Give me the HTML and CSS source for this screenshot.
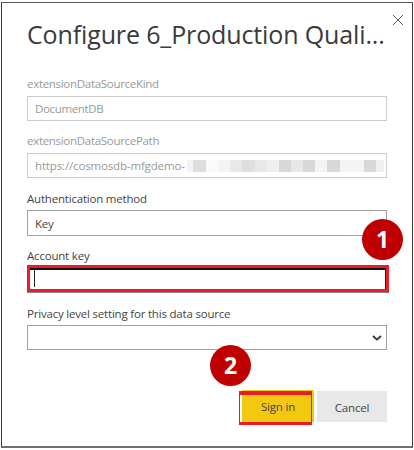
FILE: index.html
```
<!DOCTYPE html>
<html lang="en">
<head>
<meta charset="utf-8">
<title>Configure data source</title>
<link rel="stylesheet" href="styles.css">
</head>
<body>
<main class="dialog">
  <svg class="close" viewBox="0 0 12 12" aria-label="Close"><path d="M1 1L11 11M11 1L1 11"/></svg>
  <h1 class="title"><span>Configure 6_Production Quali...</span></h1>
  <div class="label muted kind">extensionDataSourceKind</div>
  <div class="field disabled">DocumentDB</div>
  <div class="label muted path">extensionDataSourcePath</div>
  <div class="field disabled"><span class="url">https://cosmosdb-mfgdemo-</span>
    <div class="mosaic"><i class="c1"></i><i class="c4"></i><i class="c0"></i><i class="c1"></i><i class="c3"></i><i class="c4"></i><i class="c3"></i><i class="c2"></i><i class="c5"></i><i class="c3"></i><i class="c5"></i><i class="c1"></i><i class="c5"></i><i class="c1"></i><i class="c1"></i><i class="c5"></i><i class="c2"></i></div>
  </div>
  <div class="label auth">Authentication method</div>
  <div class="field select method">Key</div>
  <div class="label account">Account key</div>
  <div class="field key"><span class="caret"></span></div>
  <div class="label privacy">Privacy level setting for this data source</div>
  <div class="field select level"><svg class="chevron" viewBox="0 0 10 6"><path d="M1 1L5 4.6L9 1"/></svg></div>
  <div class="actions">
    <div class="button primary"><span>Sign in</span></div>
    <div class="button cancel"><span>Cancel</span></div>
  </div>
  <div class="badge one">1</div>
  <div class="badge two">2</div>
</main>
</body>
</html>
```
FILE: styles.css
```
*, *::after { box-sizing: border-box; }
body { margin: 0; background: #fff; font-family: "Open Sans", "Noto Sans", sans-serif; }
.dialog {
  position: relative;
  width: 412px; height: 446px;
  margin: 2px 0 0 1px;
  padding: 11px 25px 0 25px;
  border: 1px solid #37393b;
  border-top-color: #55585a;
  border-bottom: 2px solid #707070;
  color: #444;
  font-size: 11.5px;
  letter-spacing: -0.2px;
}
.close { position: absolute; left: 390px; top: 11px; width: 12px; height: 12px; }
.close path { stroke: #666; stroke-width: 1; fill: none; }
.title {
  margin: 0 0 21px; height: 40px; line-height: 40px;
  font-size: 25px; font-weight: 400; letter-spacing: -0.13px; white-space: nowrap; color: #3a3a3a;
}
.label { height: 18px; line-height: 19px; margin-bottom: 3px; white-space: nowrap; }
.muted { line-height: 17px; color: #999; letter-spacing: -0.3px; }
.field {
  display: flex; align-items: center;
  width: 360px; height: 25px; padding-left: 7px;
  border: 1px solid #a0a0a0; margin-bottom: 11px;
  white-space: nowrap;
}
.disabled { border-color: #ccc; color: #999; letter-spacing: -0.35px; }
.url { width: 152px; letter-spacing: -0.15px; }
.mosaic { display: grid; grid-template-columns: 6px 13px repeat(14, 12.15px) 8px; height: 12px; margin-top: 1px; }
.c0 { background: #fafafa; }
.c1 { background: #f4f4f4; }
.c2 { background: #efefef; }
.c3 { background: #e8e8e8; }
.c4 { background: #dedede; }
.c5 { background: #d8d8d8; }
.method { height: 26px; margin-bottom: 10px; }
.account { line-height: 20px; margin-bottom: 1px; }
.key {
  width: 362px; height: 27px; border: 3px solid #ed1c24; padding-left: 4px; margin-bottom: 12px;
  box-shadow: inset 0 2px #151515, inset -1px 0 #222, 0 1px #888;
}
.privacy { line-height: 20px; }
.caret { width: 1px; height: 17px; background: #222; }
.level { justify-content: flex-end; padding-right: 4px; }
.chevron { width: 10px; height: 6px; }
.chevron path { fill: none; stroke: #333; stroke-width: 1.8; }
.actions { display: flex; gap: 3px; padding-left: 212px; margin-top: 40px; align-items: flex-start; }
.button { display: flex; align-items: center; justify-content: center; height: 32px; }
.primary {
  position: relative; width: 75px; height: 35px; padding: 0 0 2px 3px;
  background: linear-gradient(#f2c811, #f2c811) 3px 0 / 72px 32px no-repeat;
}
.primary::after {
  content: ""; position: absolute; left: 0; top: 1px; width: 73px; height: 34px;
  border: solid #ed1c24; border-width: 4px 1px 3px;
}
.cancel { width: 70px; height: 31px; margin-top: 1px; padding-top: 1px; background: #e8e8e8; }
.badge {
  position: absolute; width: 41px; height: 41px; border-radius: 50%;
  background: #c00000; color: #fff;
  font-size: 23px; font-weight: 700; letter-spacing: 0; line-height: 41px; text-align: center;
}
.one { left: 360px; top: 216px; }
.two { left: 208px; top: 342px; }
```
